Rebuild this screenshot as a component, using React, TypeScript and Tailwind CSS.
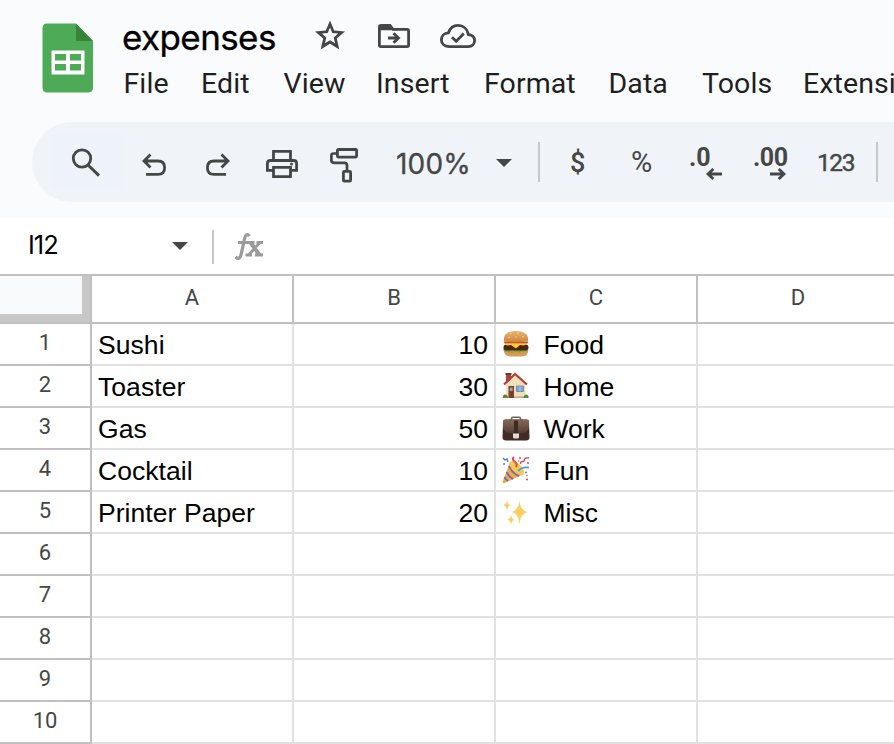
import type { ReactNode } from "react";

function Glyph({ w, h, className = "", children }: { w: number; h: number; className?: string; children: ReactNode }) {
  return (
    <svg width={w} height={h} viewBox={`0 0 ${w} ${h}`} className={`shrink-0 ${className}`} fill="none" stroke="#444746" strokeWidth="2.8">
      {children}
    </svg>
  );
}

const SheetsLogo = () => (
  <svg width="52" height="70" viewBox="0 0 52 70" className="mt-[23px] ml-[42px] shrink-0">
    <path d="M5 .5H34L51 18V64.500Q51 69.500 46 69.500H5.500Q.5 69.500 .5 64.500V5.500Q.5.500 5 .5Z" fill="#4dab57" />
    <path d="M34 .7V18H51Z" fill="#398339" />
    <path fillRule="evenodd" fill="#fff" d="M9.500 27.500H42.500V51.500H9.500ZM13 31V37.500H24V31ZM28 31V37.500H39V31ZM13 41V47.500H24V41ZM28 41V47.500H39V41Z" />
  </svg>
);

const StarIcon = () => (
  <svg width="32" height="32" viewBox="0 0 32 32" className="shrink-0">
    <path
      fill="#444746"
      fillRule="evenodd"
      d="M16 .5L20.200 10.600L31 11.500L22.800 18.600L25.300 29.500L16 23.700L6.700 29.500L9.200 18.600L1 11.500L11.800 10.600ZM16 7.600L13.700 13.100L7.900 13.600L12.300 17.500L11 23.300L16 20.200L21 23.300L19.700 17.500L24.100 13.600L18.300 13.100Z"
    />
  </svg>
);

const FolderIcon = () => (
  <Glyph w={32} h={24}>
    <path d="M1.400 3Q1.400 1.400 3 1.400H12L15 5.400H29Q30.600 5.400 30.600 7V21Q30.600 22.600 29 22.600H3Q1.400 22.600 1.400 21Z" />
    <path d="M1.400 2H12L15 5.500H1.400Z" fill="#444746" strokeWidth="1.500" />
    <path d="M10 14H20M15.500 9.200L20.500 14L15.500 18.800" />
  </Glyph>
);

const CloudIcon = () => (
  <Glyph w={36} h={24}>
    <path d="M9.500 22.600C4.500 22.600 1.400 19.800 1.400 16C1.400 12 4.300 9.100 8.300 8.900C10 4.200 13.400 1.400 18 1.400C23.500 1.400 27.500 5.100 28.300 10.500C32 10.700 34.600 13.100 34.600 16.600C34.600 20.200 32 22.600 28.300 22.600Z" />
    <path d="M12 13.200L16.200 17.300L23.800 9.500" />
  </Glyph>
);

const SearchIcon = () => (
  <Glyph w={30} h={30}>
    <circle cx="11" cy="10.500" r="8.700" />
    <path d="M17 17L28 27.700" strokeWidth="3" />
  </Glyph>
);

const UndoIcon = ({ className = "" }: { className?: string }) => (
  <Glyph w={24} h={24} className={className}>
    <path d="M8.500 1.500L2 8L8.500 14.500M2.500 8H16Q22.600 8 22.600 14.700Q22.600 21.400 16 21.400H4" />
  </Glyph>
);

const PrinterIcon = () => (
  <Glyph w={32} h={28}>
    <path d="M7.500 10V1.400H24.500V10M7.500 20.400H1.400V13.500Q1.400 10.500 4.400 10.500H27.600Q30.600 10.500 30.600 13.500V20.400H24.500M7.500 17.400H24.500V26.600H7.500Z" />
    <circle cx="25.500" cy="14" r="1.500" fill="#444746" stroke="none" />
  </Glyph>
);

const RollerIcon = () => (
  <Glyph w={28} h={35}>
    <rect x="7.400" y="1.500" width="19.200" height="7.600" rx="1" />
    <path d="M7 5.500H3.400Q1.400 5.500 1.400 7.500V12.300Q1.400 14.800 4 14.800H14.500Q17 14.800 17 17.500V23" strokeWidth="2.700" />
    <rect x="13.400" y="23.400" width="7.200" height="9.800" rx="1" />
  </Glyph>
);

const Caret = ({ className = "" }: { className?: string }) => (
  <svg width="16" height="8" viewBox="0 0 16 8" className={`shrink-0 ${className}`}>
    <path d="M0 0H16L8 8Z" fill="#444746" />
  </svg>
);

const SmallArrow = ({ className = "" }: { className?: string }) => (
  <Glyph w={16} h={12} className={className}>
    <path d="M16 6H2M7.300 1L2 6L7.300 11" />
  </Glyph>
);

const Burger = () => (
  <svg width="28" height="28" viewBox="0 0 28 28">
    <defs>
      <linearGradient id="bun" x1="0" y1="0" x2="0" y2="1">
        <stop offset="0" stopColor="#eeb46c" />
        <stop offset="1" stopColor="#c98440" />
      </linearGradient>
    </defs>
    <path d="M2 20H26V22Q25 26.500 19 26.500H9Q3 26.500 2 22Z" fill="#d99a58" />
    <path d="M1 19.500Q4 17 7 20T14 20T21 19T27 19.500Q25 22.500 22 21Q18 23.500 14 22Q9 23.500 6 22Q2 22.500 1 19.500Z" fill="#79a82d" />
    <rect x="1.500" y="14.500" width="25" height="6" rx="3" fill="#4a2418" />
    <path d="M2 13H26L22 15.500L18 15L14 18.500L9 15L5 15.500Z" fill="#ffc928" />
    <path d="M1.500 11.500H26.500L25.500 13.200H2.500Z" fill="#c9412e" />
    <path d="M2 11C1 4.500 6 1 14 1S27 4.500 26 11Q14 13.500 2 11Z" fill="url(#bun)" />
    <path d="M8 4L10 3.500M15 3H17M20 6L22 7M6 8L8 7M13 7H15" stroke="#ffdda0" strokeWidth=".7" />
  </svg>
);

const House = () => (
  <svg width="28" height="28" viewBox="0 0 28 28">
    <path d="M4 1.500H9V11H4Z" fill="#a3473c" />
    <path d="M3.500 1H9.500V3H3.500Z" fill="#753128" />
    <path d="M4 12L13 3L23.500 12V26H4Z" fill="#f0dfbd" />
    <path d="M2 12.500L13 2L25 12.500" fill="none" stroke="#b43d38" strokeWidth="2.200" />
    <path d="M6.500 14H12V26H6.500Z" fill="#7a4029" />
    <path d="M7.800 15.500H10.700V19H7.800Z" fill="#8fa9b5" />
    <path d="M14.500 14H21.500V19.500H14.500Z" fill="#6fb1e5" stroke="#8f8a88" />
    <path d="M18 14V19.500" stroke="#b9d4e8" strokeWidth=".7" />
    <path d="M12 26V24.500H24V26Z" fill="#b8a78c" />
    <path d="M.8 25.500Q1 22 3.500 22.500Q6 23 6 26H1Z" fill="#568a35" />
    <path d="M21.500 26Q22 22 24.500 22.500Q27 23 26.500 26Z" fill="#568a35" />
  </svg>
);

const Briefcase = () => (
  <svg width="28" height="28" viewBox="0 0 28 28">
    <defs>
      <linearGradient id="leather" x1="0" y1="0" x2="0" y2="1">
        <stop offset="0" stopColor="#82695a" />
        <stop offset="1" stopColor="#533d32" />
      </linearGradient>
    </defs>
    <path d="M9.500 6V4.500Q9.500 3.200 11 3.200H17Q18.500 3.200 18.500 4.500V6" fill="none" stroke="#71635b" strokeWidth="1.600" />
    <path d="M3 5.500H25Q27 5.500 27 8L27.500 24Q27 26.500 24 26.500H4Q1 26.500 .5 24L1 8Q1 5.500 3 5.500Z" fill="#432b23" />
    <path d="M3 5.500H25Q27 5.500 27 8V14Q25 19 19 19.500H9Q3 19 1 14V8Q1 5.500 3 5.500Z" fill="url(#leather)" />
    <path d="M12 6.500H16V19.500H12Z" fill="#3e2a22" />
    <path d="M11 19.500H17V23Q17 24.500 15.500 24.500H12.500Q11 24.500 11 23Z" fill="#dedcd9" />
  </svg>
);

const Party = () => (
  <svg width="28" height="28" viewBox="0 0 28 28">
    <path d="M7.500 7.500L.5 26Q.5 28 4 26.500L22 18Z" fill="#e5b044" />
    <ellipse cx="14.500" cy="12" rx="4.500" ry="9" transform="rotate(-50 14.500 12)" fill="#f2cc50" />
    <path d="M7 10Q10 17 17 20M4.500 16Q7 21 11 23M2.500 21Q4 24 6 25" fill="none" stroke="#8b5cc0" strokeWidth="1.800" />
    <path d="M14 11Q16 8 12.500 5.500Q9.500 3 12 1" fill="none" stroke="#e04558" strokeWidth="2" />
    <path d="M16 15Q20 10.500 27 11.500" fill="none" stroke="#5a94e8" strokeWidth="1.800" />
    <path d="M1 2L3 4L5 3L6 6" fill="none" stroke="#4b72d1" strokeWidth="1.300" />
    <path d="M18.500 8Q18 5.500 20.500 5.500Q23 5.500 22.500 3Q24 1.500 27 2" fill="none" stroke="#d94367" strokeWidth="1.400" />
    <g strokeWidth="1.600">
      <path d="M17 2H19M25 7H27" stroke="#d8485f" />
      <path d="M1 8H3M23 16.500H25" stroke="#528cdd" />
      <path d="M24 19.500H26M16 5H17.500" stroke="#e7a33d" />
      <path d="M24 23.500H26" stroke="#d24b70" />
    </g>
  </svg>
);

const Sparkles = () => (
  <svg width="28" height="28" viewBox="0 0 28 28" fill="#fbcf62">
    <path d="M17.500 2.500Q18.300 12.300 25.500 14Q18.300 15.700 17.500 26Q16.300 15.700 10 14Q16.300 12.300 17.500 2.500Z" />
    <path d="M5 2Q5.500 6.500 8.500 7Q5.500 8 5 13Q4.500 8 1.500 7Q4.500 6.500 5 2Z" />
    <path d="M9 16.500Q9.500 21 12.500 21.500Q9.500 22.500 9 27Q8.500 22.500 5.500 21.500Q8.500 21 9 16.500Z" />
  </svg>
);

const menus = [
  { label: "File", width: "w-[77.500px]" },
  { label: "Edit", width: "w-[82.500px]" },
  { label: "View", width: "w-[92.500px]" },
  { label: "Insert", width: "w-[108px]" },
  { label: "Format", width: "w-[124.500px]" },
  { label: "Data", width: "w-[93.500px]" },
  { label: "Tools", width: "w-[101px]" },
  { label: "Extensi", width: "w-[92px]" },
];

const rows: { item?: string; cost?: number; category?: string; icon?: ReactNode }[] = [
  { item: "Sushi", cost: 10, category: "Food", icon: <Burger /> },
  { item: "Toaster", cost: 30, category: "Home", icon: <House /> },
  { item: "Gas", cost: 50, category: "Work", icon: <Briefcase /> },
  { item: "Cocktail", cost: 10, category: "Fun", icon: <Party /> },
  { item: "Printer Paper", cost: 20, category: "Misc", icon: <Sparkles /> },
  {}, {}, {}, {}, {},
];

const cell = "h-[42px] border-r-2 border-b-2 border-[#e1e1e1] overflow-hidden whitespace-nowrap";

export default function App() {
  return (
    <div className="flex h-[744px] w-[894px] flex-col overflow-hidden bg-white text-black">
      <header className="h-[218px] shrink-0 bg-[#f9fbfd]">
        <div className="flex h-[122px]">
          <SheetsLogo />
          <div className="ml-[28px] min-w-0 flex-1">
            <div className="flex h-[62px] items-start pt-[16px]">
              <h1 className="-mt-px w-[192px] font-['Inter',sans-serif] text-[35px] leading-[44px] tracking-[-0.6px] [-webkit-text-stroke:0.3px_black]">expenses</h1>
              <div className="mt-[4px]"><StarIcon /></div>
              <div className="ml-[32px] mt-[8px]"><FolderIcon /></div>
              <div className="ml-[30px] mt-[8px]"><CloudIcon /></div>
            </div>
            <nav className="flex h-[44px] items-center pl-[1.500px] font-['Roboto',sans-serif] text-[28.500px] tracking-[0.1px] text-[#1f1f1f]">
              {menus.map((m) => (
                <span key={m.label} className={`${m.width} shrink-0`}>{m.label}</span>
              ))}
            </nav>
          </div>
        </div>
        <div className="ml-[32px] flex h-[80px] items-start rounded-l-full bg-[#f0f3f8] font-['Roboto',sans-serif] text-[#444746]">
          <div className="ml-[18px] mt-[12px] flex h-[56px] w-[74px] rounded bg-[#eef2f9] pl-[21px] pt-[14px]"><SearchIcon /></div>
          <UndoIcon className="ml-[18px] mt-[31px]" />
          <UndoIcon className="ml-[40px] mt-[31px] -scale-x-100" />
          <div className="ml-[36px] mt-[28px]"><PrinterIcon /></div>
          <div className="ml-[32px] mt-[26px]"><RollerIcon /></div>
          <span className="ml-[38px] mt-[22px] w-[100px] font-['Inter',sans-serif] text-[28px] leading-[40px] tracking-[0.2px] [-webkit-text-stroke:0.3px_#444746]">100%</span>
          <Caret className="mt-[37px]" />
          <div className="ml-[26px] mt-[20px] h-[40px] w-[2px] shrink-0 bg-[#c7c7c7]" />
          <span className="ml-[30px] mt-[21px] w-[61px] shrink-0 text-[27px] font-medium leading-[40px]">$</span>
          <span className="mt-[20px] w-[58px] shrink-0 text-[29px] leading-[40px]">%</span>
          <div className="mt-[22px] w-[64px] shrink-0">
            <div className="h-[24px] text-[25px] font-bold leading-[28px]">.0</div>
            <SmallArrow className="ml-[17px]" />
          </div>
          <div className="mt-[22px] w-[64px] shrink-0">
            <div className="h-[24px] text-[25px] font-bold leading-[28px] tracking-[-0.4px]">.00</div>
            <SmallArrow className="ml-[17px] -scale-x-100" />
          </div>
          <span className="mt-[21px] w-[59px] shrink-0 text-[24.500px] leading-[40px] tracking-[-1.400px] [-webkit-text-stroke:0.4px_#444746]">123</span>
          <div className="mt-[20px] h-[40px] w-[2px] shrink-0 bg-[#c7c7c7]" />
        </div>
      </header>

      <div className="flex h-[56px] shrink-0 items-center pl-[28px]">
        <span className="-mt-[2px] w-[144px] font-['Inter',sans-serif] text-[25.500px] tracking-[-1px]">I12</span>
        <Caret />
        <div className="ml-[24px] mt-[2px] h-[34px] w-[2px] bg-[#c7c7c7]" />
        <svg width="30" height="30" viewBox="0 0 30 30" className="ml-[20px] mt-[2px]" fill="none" stroke="#9b9b9b">
          <path d="M1.500 25Q5.500 29 7.200 22L10.500 7Q12 0 15.500 4M4 10.500H15" strokeWidth="3.200" />
          <path d="M13.500 10.500H20.500M22.500 10.500H29M11.500 23H18M21 23H29M26 10.500L14.500 23" strokeWidth="2.800" />
          <path d="M16.500 10.500L25.500 23" strokeWidth="4" />
        </svg>
      </div>

      <div className="flex h-[50px] shrink-0 border-y-2 border-[#c0c0c0] font-['Roboto',sans-serif] text-[22px] text-[#444746]">
        <div className="h-[46px] w-[92px] shrink-0 border-r-2 border-[#c0c0c0]">
          <div className="h-[46px] border-r-8 border-b-8 border-[#c7c7c7] bg-[#f8f9fa]" />
        </div>
        {["A", "B", "C", "D"].map((c) => (
          <div key={c} className="h-[46px] w-[202px] shrink-0 border-r-2 border-[#c0c0c0] text-center leading-[44px]">{c}</div>
        ))}
      </div>

      <main className="font-['Liberation_Sans',Arial,sans-serif] text-[26.500px] leading-[42px]">
        {rows.map((r, i) => (
          <div key={i} className="flex">
            <div className="h-[42px] w-[92px] shrink-0 border-r-2 border-b-2 border-[#c0c0c0] text-center font-['Roboto',sans-serif] text-[22px] leading-[38px] text-[#444746]">{i + 1}</div>
            <div className={`${cell} w-[202px] shrink-0 pl-[6px] tracking-[0.06px]`}>{r.item}</div>
            <div className={`${cell} w-[202px] shrink-0 pr-[6px] text-right`}>{r.cost}</div>
            <div className={`${cell} flex w-[202px] shrink-0`}>
              {r.icon && <div className="ml-[6px] mt-[6px] w-[41.500px] shrink-0">{r.icon}</div>}
              {r.category}
            </div>
            <div className={`${cell} w-[202px] shrink-0`} />
          </div>
        ))}
      </main>
    </div>
  );
}
